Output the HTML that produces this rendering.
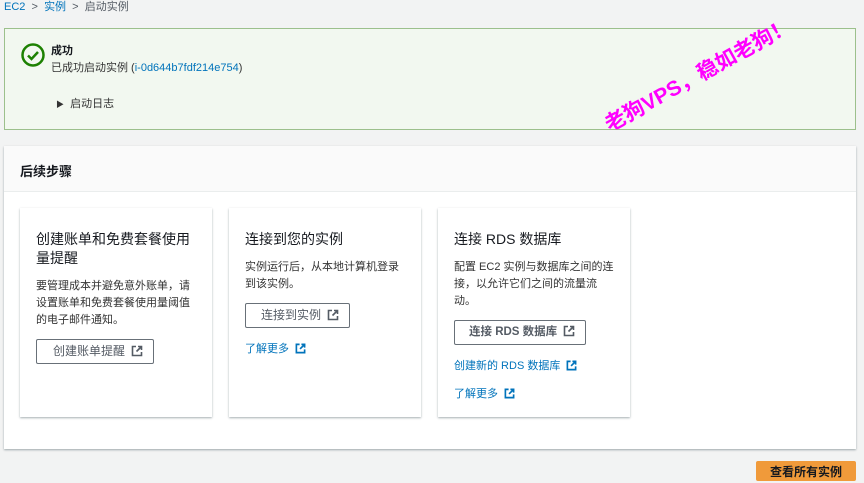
<!DOCTYPE html>
<html><head><meta charset="utf-8"><style>
*{box-sizing:border-box;margin:0;padding:0}
body{width:864px;height:470px;overflow:hidden;background:#f2f3f3;font-family:"Liberation Sans","Noto Sans CJK SC",sans-serif;color:#16191f;position:relative}
.a{position:absolute}
.lnk{color:#0073bb}
.card{position:absolute;top:208px;width:192px;height:209px;background:#fff;box-shadow:0 1px 2px rgba(0,28,36,.35);padding:0 16px}
.card h3{font-weight:normal;font-size:14px;line-height:19px;margin-top:22px;color:#16191f}
.card p{font-size:11px;line-height:17px;color:#333;margin-top:10px}
.btn{display:inline-block;border:1px solid #687078;border-radius:2px;height:25px;line-height:23px;font-size:12px;color:#545b64;padding:0 10px 0 24px;margin-top:10px;background:#fff}
.ic{display:inline-block;vertical-align:-2px;margin-left:6px}
.ll{font-size:11px;color:#0073bb;margin-top:12px}
</style></head><body>
<div class="a" style="left:4px;top:-2px;font-size:11px;color:#545b64"><span class="lnk">EC2</span> &nbsp;&gt;&nbsp; <span class="lnk">实例</span> &nbsp;&gt;&nbsp; 启动实例</div>
<div class="a" style="left:4px;top:28px;width:852px;height:102px;background:#f2f8f0;border:1px solid #9cc08c"></div>
<svg class="a" style="left:20px;top:42px" width="26" height="26" viewBox="0 0 26 26"><circle cx="13" cy="13" r="10.5" fill="none" stroke="#1d8102" stroke-width="2.5"/><path d="M8 13.5l3.5 3.5 6.5-7" fill="none" stroke="#1d8102" stroke-width="2.5"/></svg>
<div class="a" style="left:51px;top:42px;font-size:11px;font-weight:bold">成功</div>
<div class="a" style="left:51px;top:59px;font-size:11px;color:#333">已成功启动实例 (<span class="lnk">i-0d644b7fdf214e754</span>)</div>
<div class="a" style="left:56px;top:95px;font-size:11px;color:#333"><span style="font-size:8px;color:#333">▶</span>&nbsp; 启动日志</div>
<div class="a" style="left:4px;top:146px;width:852px;height:303px;background:#fff;box-shadow:0 1px 2px rgba(0,28,36,.35)"></div>
<div class="a" style="left:4px;top:146px;width:852px;height:46px;background:#fafafa;border-bottom:1px solid #eaeded"></div>
<div class="a" style="left:20px;top:161px;font-size:13px;font-weight:bold">后续步骤</div>
<div class="card" style="left:20px"><h3>创建账单和免费套餐使用量提醒</h3><p>要管理成本并避免意外账单，请设置账单和免费套餐使用量阈值的电子邮件通知。</p><div class="btn" style="padding-left:16px">创建账单提醒<svg class="ic" width="12" height="12" viewBox="0 0 12 12"><path d="M5 1.5H1.5v9h9V7M7 1.5h3.5V5M10.5 1.5L5.5 6.5" fill="none" stroke="#545b64" stroke-width="1.6"/></svg></div></div>
<div class="card" style="left:229px"><h3>连接到您的实例</h3><p>实例运行后，从本地计算机登录到该实例。</p><div class="btn" style="padding-left:15px">连接到实例<svg class="ic" width="12" height="12" viewBox="0 0 12 12"><path d="M5 1.5H1.5v9h9V7M7 1.5h3.5V5M10.5 1.5L5.5 6.5" fill="none" stroke="#545b64" stroke-width="1.6"/></svg></div><div class="ll">了解更多<svg class="ic" width="11" height="11" viewBox="0 0 12 12"><path d="M5 1.5H1.5v9h9V7M7 1.5h3.5V5M10.5 1.5L5.5 6.5" fill="none" stroke="#0073bb" stroke-width="1.8"/></svg></div></div>
<div class="card" style="left:438px"><h3>连接 RDS 数据库</h3><p>配置 EC2 实例与数据库之间的连接，以允许它们之间的流量流动。</p><div class="btn" style="padding-left:14px;font-weight:bold;font-size:11.5px">连接 RDS 数据库<svg class="ic" width="12" height="12" viewBox="0 0 12 12"><path d="M5 1.5H1.5v9h9V7M7 1.5h3.5V5M10.5 1.5L5.5 6.5" fill="none" stroke="#545b64" stroke-width="1.6"/></svg></div><div class="ll">创建新的 RDS 数据库<svg class="ic" width="11" height="11" viewBox="0 0 12 12"><path d="M5 1.5H1.5v9h9V7M7 1.5h3.5V5M10.5 1.5L5.5 6.5" fill="none" stroke="#0073bb" stroke-width="1.8"/></svg></div><div class="ll">了解更多<svg class="ic" width="11" height="11" viewBox="0 0 12 12"><path d="M5 1.5H1.5v9h9V7M7 1.5h3.5V5M10.5 1.5L5.5 6.5" fill="none" stroke="#0073bb" stroke-width="1.8"/></svg></div></div>
<div class="a" style="left:756px;top:461px;width:100px;height:20px;background:#f09a3a;border-radius:2px;color:#16191f;font-size:12px;font-weight:bold;text-align:center;line-height:22px">查看所有实例</div>
<div class="a" style="left:606px;top:110px;font-size:21px;font-weight:bold;color:#ff00ff;white-space:nowrap;transform:rotate(-29deg);transform-origin:0 50%">老狗VPS，稳如老狗！</div>
</body></html>
